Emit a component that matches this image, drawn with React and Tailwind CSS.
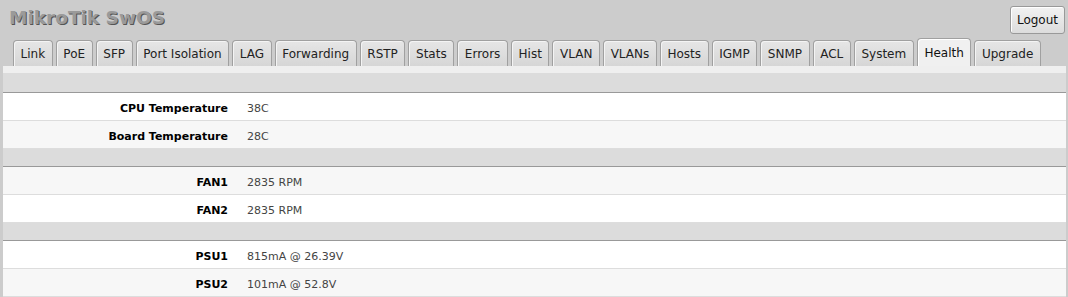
import React from "react";

const tabs = [
  "Link", "PoE", "SFP", "Port Isolation", "LAG", "Forwarding", "RSTP", "Stats",
  "Errors", "Hist", "VLAN", "VLANs", "Hosts", "IGMP", "SNMP", "ACL", "System",
  "Health", "Upgrade",
];

const sections = [
  [
    ["CPU Temperature", "38C"],
    ["Board Temperature", "28C"],
  ],
  [
    ["FAN1", "2835 RPM"],
    ["FAN2", "2835 RPM"],
  ],
  [
    ["PSU1", "815mA @ 26.39V"],
    ["PSU2", "101mA @ 52.8V"],
  ],
];

// row shading follows the table's odd/even order, bands included
const shades = [
  ["bg-white", "bg-[#f7f7f7]"],
  ["bg-[#f7f7f7]", "bg-white"],
  ["bg-white", "bg-[#f7f7f7]"],
];

function Tab({ label, active }) {
  if (active) {
    return (
      <div className="h-[28px] px-[6.6px] flex items-center rounded-t-[4px] border border-b-0 border-[#a0a0a0] bg-[#f0f0f0] shadow-[inset_1px_1px_0_#fff] text-[#111]">
        {label}
      </div>
    );
  }
  return (
    <div className="h-[26px] px-[6.6px] flex items-center rounded-t-[4px] border border-b-0 border-[#a0a0a0] bg-gradient-to-b from-[#e6e6e6] to-[#d6d6d6] shadow-[inset_1px_1px_0_#f4f4f4] text-[#222]">
      {label}
    </div>
  );
}

export default function App() {
  return (
    <div className="w-[1068px] h-[297px] overflow-hidden bg-[#cccccc] font-['DejaVu_Sans',Verdana,sans-serif] text-[11px]">
      <div className="flex justify-between items-start pl-[9px] pr-[3px] pt-[6px] h-[38px]">
        <div className="mt-[1px] text-[18.5px] font-bold text-[#9a9a9a] leading-[22px] [text-shadow:1px_1px_0_#555]">
          MikroTik SwOS
        </div>
        <button className="h-[28px] px-[6px] rounded-[3px] border border-[#999] bg-gradient-to-b from-[#f2f2f2] to-[#dcdcdc] text-[12px] text-[#111] shadow-[inset_1px_1px_0_#fff]">
          Logout
        </button>
      </div>
      <div className="flex items-end gap-[3px] pl-[13px] h-[28px] text-[12px]">
        {tabs.map((t) => (
          <Tab key={t} label={t} active={t === "Health"} />
        ))}
      </div>
      <div className="ml-[3px] mr-[2px] bg-[#efefef] pt-[7px]">
        {sections.map((rows, i) => (
          <div key={i}>
            <div className={`bg-[#dcdcdc] border-b border-[#999] ${i === 0 ? "h-[20px]" : "h-[18px]"}`} />
            {rows.map(([k, v], j) => (
              <div
                key={k}
                className={`h-[28px] pt-[6px] flex items-center border-b border-[#dddddd] ${shades[i][j]}`}
              >
                <div className="w-[225px] text-right font-bold text-black">{k}</div>
                <div className="pl-[19px] text-[#444]">{v}</div>
              </div>
            ))}
          </div>
        ))}
      </div>
    </div>
  );
}
